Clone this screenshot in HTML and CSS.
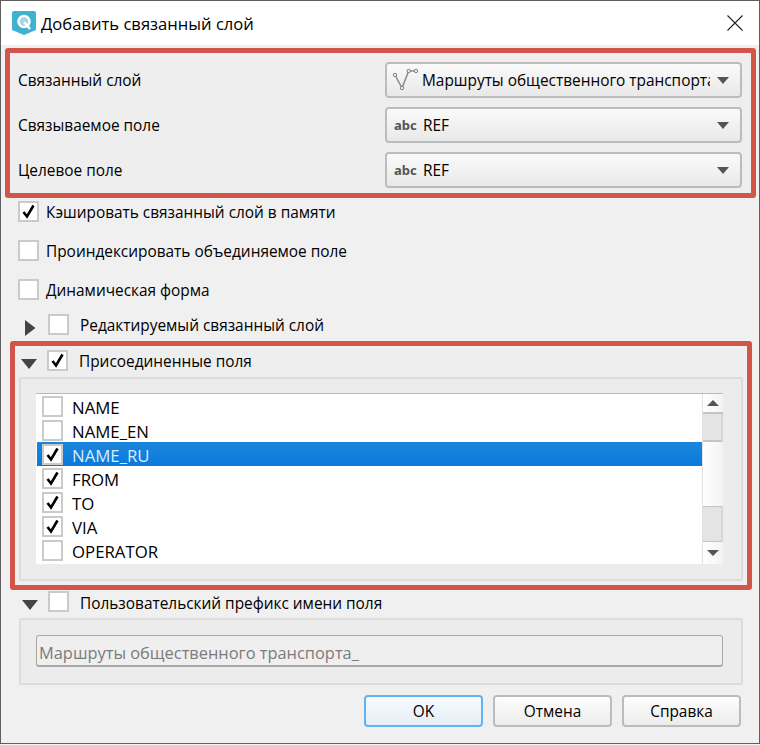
FILE: index.html
```html
<!DOCTYPE html>
<html lang="ru">
<head>
    <meta charset="UTF-8">
    <title>Добавить связанный слой</title>
    <link rel="stylesheet" href="styles.css">
</head>
<body>
    <svg class="defs" width="0" height="0">
        <symbol id="check" viewBox="0 0 21 21"><path d="M5.500 11 L9 15.500 L15.500 4.500" fill="none" stroke="#000" stroke-width="2.600"/></symbol>
        <symbol id="arrow-down" viewBox="0 0 16 12"><path d="M0 1 H16 L8 11 Z" fill="#444"/></symbol>
        <symbol id="arrow-right" viewBox="0 0 12 16"><path d="M1 0 V16 L11.500 8 Z" fill="#444"/></symbol>
    </svg>

    <div class="dialog">
        <header class="titlebar">
            <svg class="app-icon" width="24" height="24" viewBox="0 0 24 24">
                <path d="M2 0 H22 Q24 0 24 2 V19 L12 24 L0 19 V2 Q0 0 2 0 Z" fill="#3fb2d2"/>
                <circle cx="12" cy="10.500" r="5.500" fill="#9ed6e6" stroke="#fff" stroke-width="2.500"/>
                <path d="M12 11 L18 18" stroke="#fff" stroke-width="2.500"/>
            </svg>
            <span class="title">Добавить связанный слой</span>
            <svg class="close" width="16" height="16" viewBox="0 0 16 16"><path d="M.5 .5 L15.500 15.500 M15.500 .5 L.5 15.500" stroke="#222" stroke-width="1.100"/></svg>
        </header>

        <section class="red-box top-box">
            <label class="field-label">Связанный слой</label>
            <div class="combo">
                <svg class="layer-icon" width="26" height="26" viewBox="0 0 26 26">
                    <path d="M3 8 L10 21 L16.700 4 H24" fill="none" stroke="#8a8a8a" stroke-width="1.500"/>
                    <circle cx="3" cy="8" r="1.700" fill="#eee" stroke="#808080"/>
                    <circle cx="10" cy="21" r="1.700" fill="#eee" stroke="#808080"/>
                    <circle cx="16.700" cy="4" r="1.700" fill="#eee" stroke="#808080"/>
                    <circle cx="24" cy="4" r="1.700" fill="#eee" stroke="#808080"/>
                </svg>
                <span class="combo-text">Маршруты общественного транспорта</span>
                <span class="combo-arrow"></span>
            </div>
            <label class="field-label">Связываемое поле</label>
            <div class="combo">
                <span class="abc">abc</span>
                <span class="combo-text">REF</span>
                <span class="combo-arrow"></span>
            </div>
            <label class="field-label">Целевое поле</label>
            <div class="combo">
                <span class="abc">abc</span>
                <span class="combo-text">REF</span>
                <span class="combo-arrow"></span>
            </div>
        </section>

        <div class="options">
            <div class="option">
                <span class="checkbox"><svg width="21" height="21"><use href="#check"/></svg></span>
                <span>Кэшировать связанный слой в памяти</span>
            </div>
            <div class="option">
                <span class="checkbox"></span>
                <span>Проиндексировать объединяемое поле</span>
            </div>
            <div class="option">
                <span class="checkbox"></span>
                <span>Динамическая форма</span>
            </div>
        </div>

        <div class="collapse-row editable-row">
            <span class="toggle"><svg width="12" height="16"><use href="#arrow-right"/></svg></span>
            <span class="checkbox"></span>
            <span>Редактируемый связанный слой</span>
        </div>

        <section class="red-box joined-box">
            <div class="collapse-row">
                <span class="toggle"><svg width="16" height="12"><use href="#arrow-down"/></svg></span>
                <span class="checkbox"><svg width="21" height="21"><use href="#check"/></svg></span>
                <span>Присоединенные поля</span>
            </div>
            <div class="group joined-group">
                <div class="list">
                    <div class="rows">
                        <div class="row"><span class="checkbox"></span><span>NAME</span></div>
                        <div class="row"><span class="checkbox"></span><span>NAME_EN</span></div>
                        <div class="row selected"><span class="checkbox"><svg width="21" height="21"><use href="#check"/></svg></span><span>NAME_RU</span></div>
                        <div class="row"><span class="checkbox"><svg width="21" height="21"><use href="#check"/></svg></span><span>FROM</span></div>
                        <div class="row"><span class="checkbox"><svg width="21" height="21"><use href="#check"/></svg></span><span>TO</span></div>
                        <div class="row"><span class="checkbox"><svg width="21" height="21"><use href="#check"/></svg></span><span>VIA</span></div>
                        <div class="row"><span class="checkbox"></span><span>OPERATOR</span></div>
                    </div>
                    <div class="scrollbar">
                        <div class="scroll-btn scroll-up"></div>
                        <div class="scroll-handle handle-top"></div>
                        <div class="scroll-track"></div>
                        <div class="scroll-handle handle-bottom"></div>
                        <div class="scroll-btn scroll-down"></div>
                    </div>
                </div>
            </div>
        </section>

        <div class="collapse-row prefix-row">
            <span class="toggle"><svg width="16" height="12"><use href="#arrow-down"/></svg></span>
            <span class="checkbox"></span>
            <span>Пользовательский префикс имени поля</span>
        </div>
        <div class="group prefix-group">
            <div class="prefix-input">Маршруты общественного транспорта_</div>
        </div>

        <footer class="buttons">
            <button class="btn btn-default">OK</button>
            <button class="btn">Отмена</button>
            <button class="btn">Справка</button>
        </footer>
    </div>
</body>
</html>
```

FILE: styles.css
```css
body {
    margin: 0;
    background-color: #f4f4f4;
    font-family: "Open Sans", sans-serif;
    font-size: 15.4px;
    color: #000;
}

.defs {
    position: absolute;
}

.dialog {
    box-sizing: border-box;
    width: 760px;
    height: 744px;
    background-color: #f0f0f0;
    border: 1px solid #5f5f5f;
}

.titlebar {
    display: flex;
    align-items: center;
    height: 44px;
    padding: 0 16px 0 11px;
    background-color: #fff;
}

.title {
    flex-grow: 1;
    margin-left: 5px;
    padding-top: 1px;
    font-size: 16.6px;
}

.app-icon {
    flex-shrink: 0;
}

.red-box {
    box-sizing: border-box;
    border: 5px solid #d2554a;
    border-radius: 3px;
    background-color: #eee;
}

.top-box {
    display: grid;
    grid-template-columns: 1fr 357px;
    row-gap: 9px;
    align-items: center;
    width: 751px;
    height: 150px;
    margin: 3px 0 0 4px;
    padding: 9px 9px 5px 8px;
}

.combo {
    box-sizing: border-box;
    display: flex;
    align-items: center;
    height: 36px;
    padding: 0 11px 0 8px;
    border: 2px solid #bcbcbc;
    border-radius: 4px;
    background: linear-gradient(#fafafa, #e9e9e9);
}

.layer-icon {
    flex-shrink: 0;
    margin-left: -3px;
    margin-right: 4px;
}

.abc {
    width: 27px;
    margin-left: -1px;
    margin-right: 2px;
    font-family: "Noto Sans", sans-serif;
    font-size: 13px;
    font-weight: 700;
    color: #555;
}

.combo-text {
    flex-grow: 1;
    flex-basis: 0;
    min-width: 0;
    overflow: hidden;
    white-space: nowrap;
}

.combo-arrow {
    flex-shrink: 0;
    margin-left: 7px;
    border-top: 7px solid #555;
    border-left: 6px solid transparent;
    border-right: 6px solid transparent;
}

.checkbox {
    box-sizing: border-box;
    flex-shrink: 0;
    display: block;
    width: 21px;
    height: 21px;
    border: 2px solid #cacaca;
    background-color: #fff;
}

.checkbox svg {
    display: block;
    margin: -2px;
}

.options {
    display: flex;
    flex-direction: column;
    gap: 18px;
    margin: 3px 0 0 17px;
}

.option {
    display: flex;
    align-items: center;
    gap: 7px;
    height: 21px;
}

.option span:last-child,
.collapse-row span:last-child {
    padding-top: 2px;
}

.collapse-row {
    display: flex;
    align-items: center;
    height: 21px;
}

.collapse-row .checkbox {
    margin-right: 11px;
}

.toggle {
    display: flex;
    justify-content: center;
    width: 28px;
    margin: 0 4px 0 -4px;
    padding-top: 6px;
}

.editable-row {
    margin: 14px 0 0 19px;
}

.joined-box {
    width: 742px;
    height: 249px;
    margin: 6px 0 0 9px;
    padding: 4px 4px;
}

.group {
    box-sizing: border-box;
    border: 2px solid #dcdcdc;
    border-radius: 2px;
    background-color: #ececec;
}

.joined-group {
    height: 204px;
    margin-top: 6px;
    padding: 14px 18px 0 15px;
}

.list {
    display: flex;
    height: 170px;
    border-top: 1px solid #b9b9b9;
    background-color: #fff;
}

.rows {
    flex-grow: 1;
    padding-left: 1px;
}

.row {
    display: flex;
    align-items: center;
    gap: 9px;
    height: 24px;
    padding-left: 5px;
    font-size: 16.8px;
}

.row span:last-child {
    padding-top: 2px;
}

.row.selected {
    background: linear-gradient(#1b86dd, #0a79da);
    color: #dcebfa;
}

.scrollbar {
    display: flex;
    flex-direction: column;
    flex-shrink: 0;
    width: 21px;
    border-left: 1px solid #e2e2e2;
    box-sizing: border-box;
}

.scroll-btn {
    display: flex;
    align-items: center;
    justify-content: center;
    background: linear-gradient(90deg, #fff, #f3f3f3);
}

.scroll-up {
    height: 20px;
    border-bottom: 2px solid #c4c4c4;
    box-sizing: border-box;
}

.scroll-down {
    height: 22px;
}

.scroll-up::after {
    content: "";
    border-bottom: 6px solid #555;
    border-left: 6px solid transparent;
    border-right: 6px solid transparent;
}

.scroll-down::after {
    content: "";
    border-top: 6px solid #555;
    border-left: 6px solid transparent;
    border-right: 6px solid transparent;
}

.scroll-handle {
    box-sizing: border-box;
    background-color: #e4e4e4;
    border-right: 2px solid #d6d6d6;
}

.handle-top {
    height: 28px;
    border-bottom: 2px solid #c4c4c4;
}

.handle-bottom {
    height: 36px;
    border-top: 1px solid #c4c4c4;
    border-bottom: 1px solid #c4c4c4;
}

.scroll-track {
    flex-grow: 1;
    background: linear-gradient(90deg, #fff, #f2f2f2);
}

.prefix-row {
    margin: 1px 0 0 19px;
}

.prefix-row span:last-child {
    padding-top: 4px;
}

.prefix-group {
    width: 724px;
    height: 67px;
    margin: 6px 0 0 18px;
    padding: 15px 18px 0 15px;
}

.prefix-input {
    box-sizing: border-box;
    height: 32px;
    padding-left: 2px;
    line-height: 33px;
    font-size: 16.4px;
    border: 1px solid #a8a8a8;
    border-bottom-width: 2px;
    border-radius: 3px;
    background-color: #efefef;
    color: #7b7b7b;
}

.buttons {
    display: flex;
    justify-content: flex-end;
    gap: 10px;
    margin-top: 10px;
    padding-right: 18px;
}

.btn {
    box-sizing: border-box;
    width: 119px;
    height: 32px;
    padding: 0;
    border: 2px solid #bcbcbc;
    border-radius: 4px;
    background: linear-gradient(#fdfdfd, #ececec);
    font-family: inherit;
    font-size: 15.4px;
    color: #000;
}

.btn-default {
    border-color: #62b4f0;
    background: linear-gradient(#f8fbfe, #e4eef6);
}
```
